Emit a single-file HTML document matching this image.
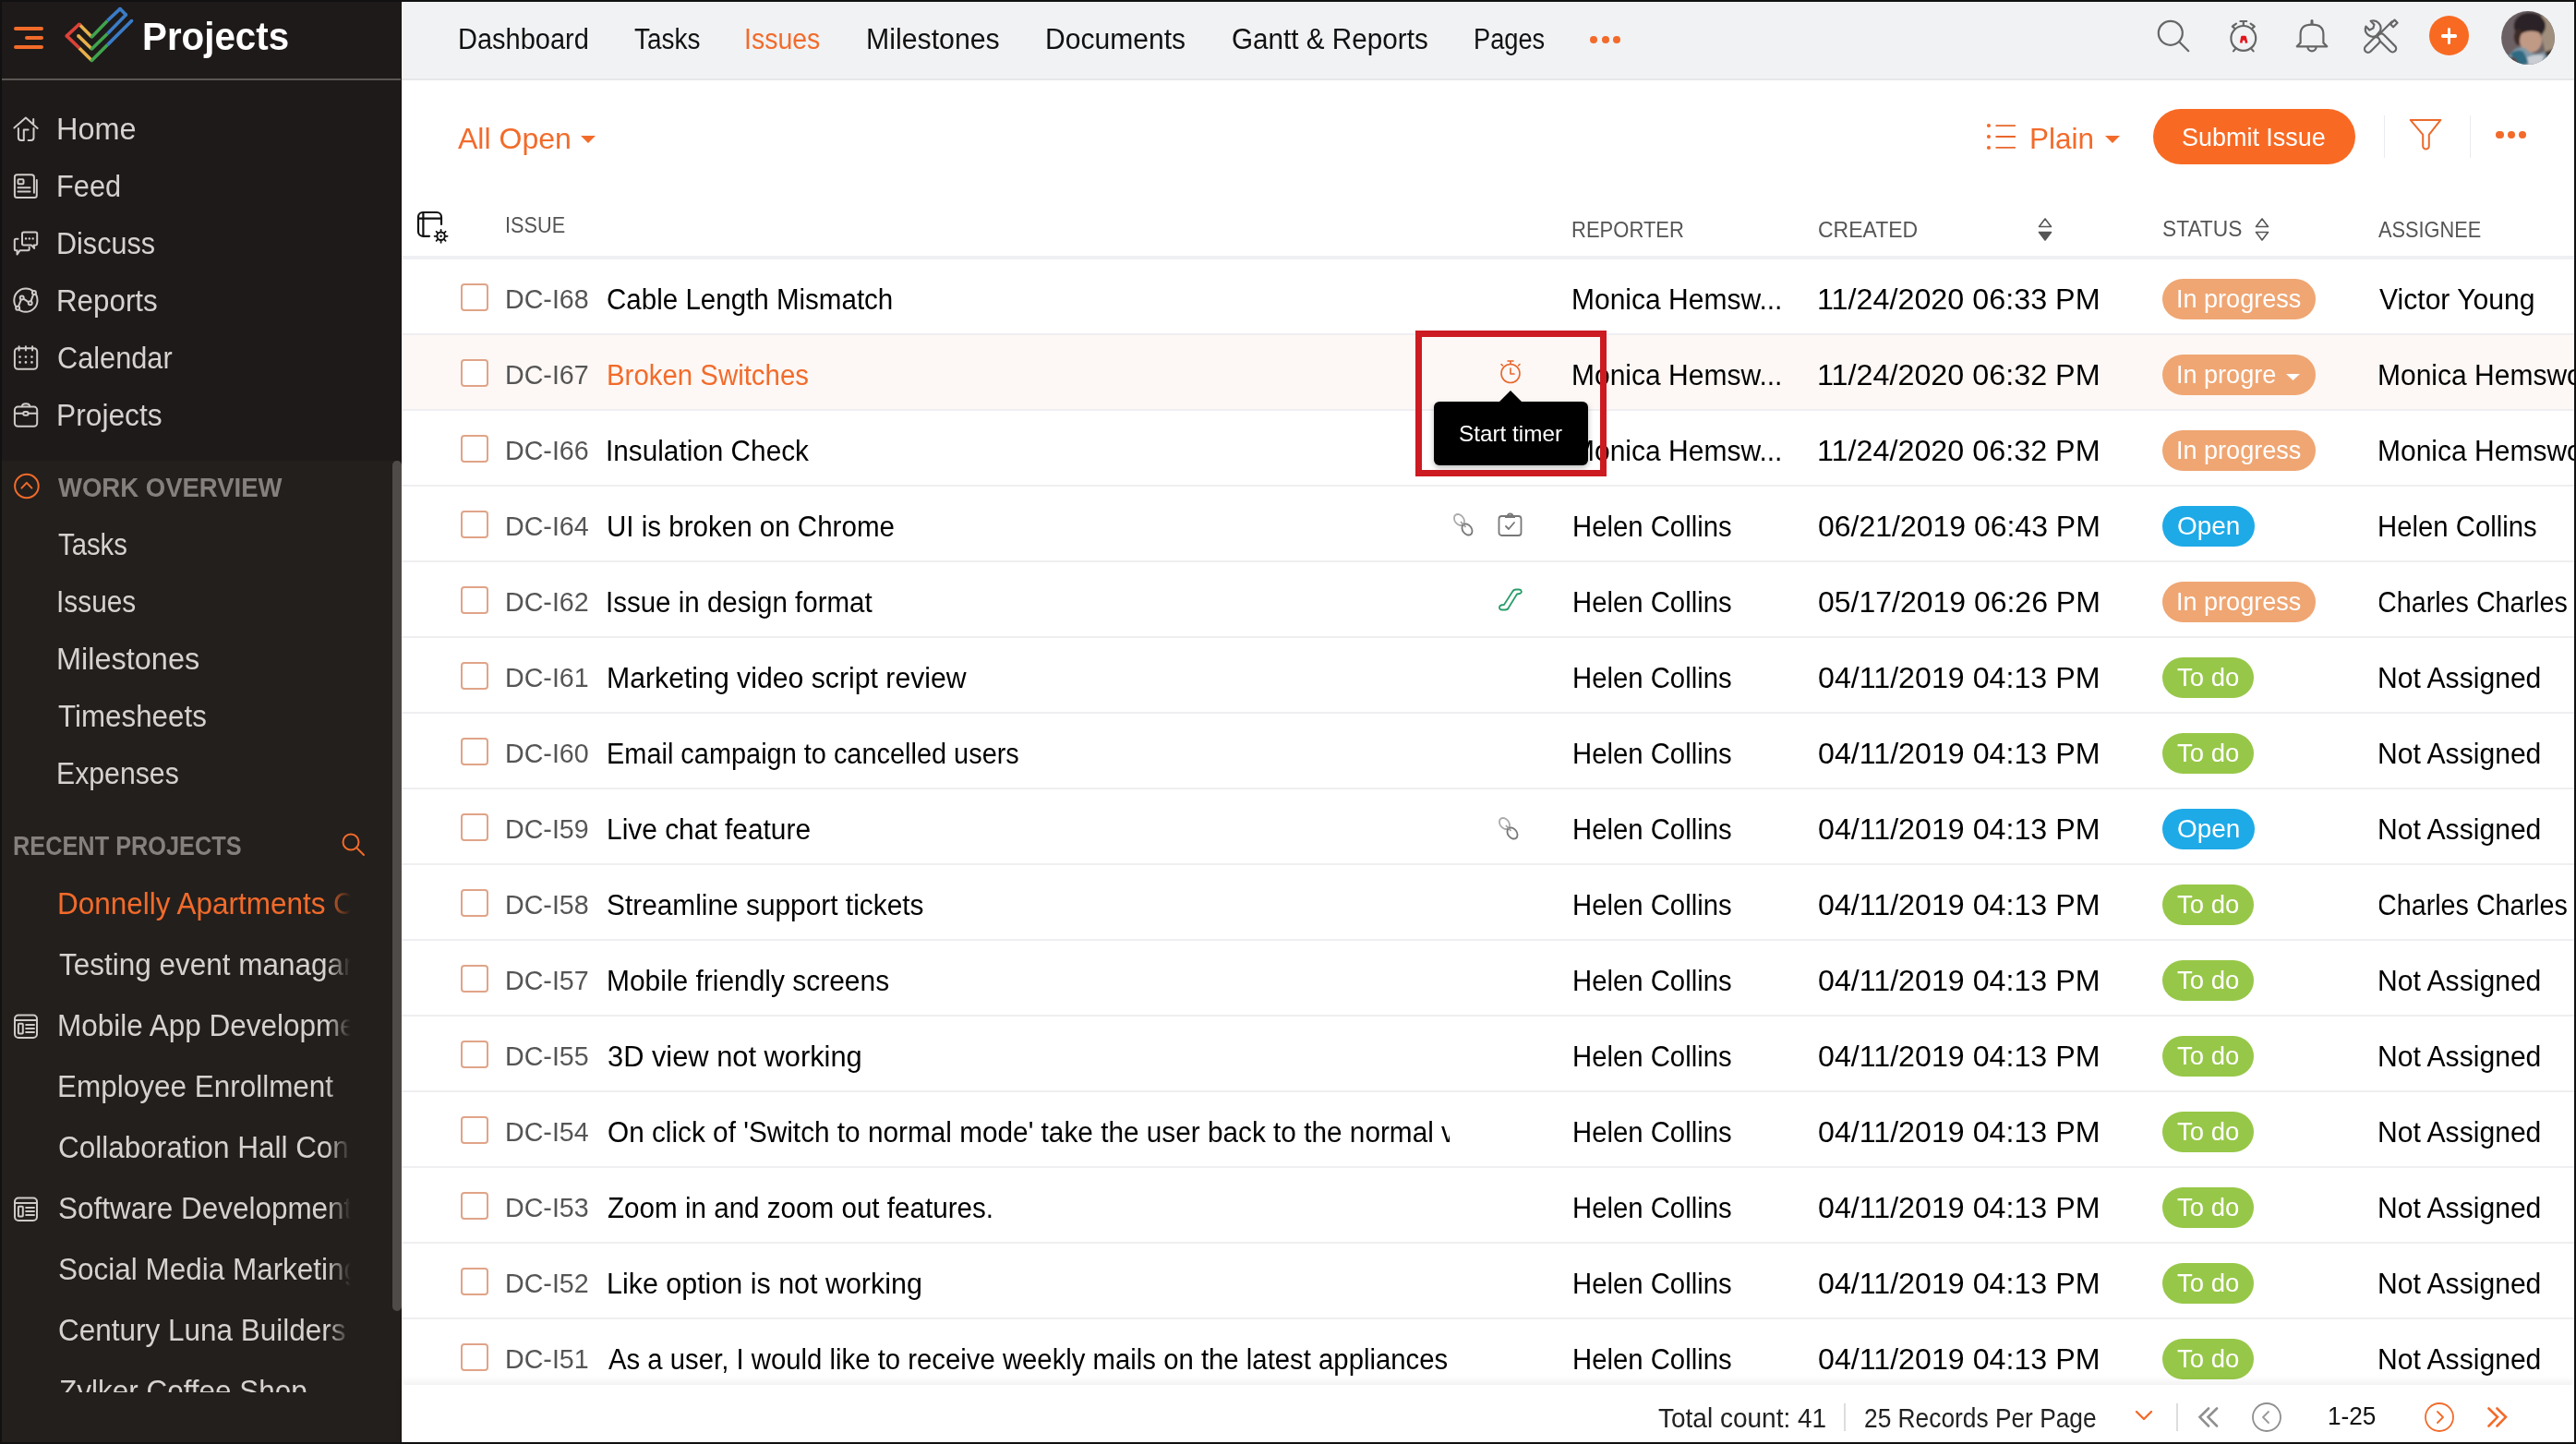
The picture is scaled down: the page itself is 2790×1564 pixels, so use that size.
<!DOCTYPE html><html><head><meta charset="utf-8"><style>
html,body{margin:0;padding:0;}
body{width:2790px;height:1564px;position:relative;overflow:hidden;background:#111;font-family:"Liberation Sans", sans-serif;}
.t{position:absolute;white-space:nowrap;}
.r{position:absolute;}
.s{position:absolute;overflow:visible;}
</style></head><body>
<div class="r" style="left:2px;top:2px;width:433px;height:1560px;background:#1e1a19;"></div>
<div class="r" style="left:2px;top:499px;width:433px;height:1063px;background:#231f1c;"></div>
<div class="r" style="left:2px;top:85px;width:433px;height:2px;background:#5b5654;"></div>
<div class="r" style="left:15px;top:29px;width:32px;height:4px;background:#f36b2a;border-radius:2px;"></div>
<div class="r" style="left:27px;top:39px;width:20px;height:4px;background:#f36b2a;border-radius:2px;"></div>
<div class="r" style="left:15px;top:49px;width:32px;height:4px;background:#f36b2a;border-radius:2px;"></div>
<svg class="s" style="left:0px;top:0px;" width="160" height="80" viewBox="0 0 160 80" fill="none"><g stroke-width="3.6" stroke-linecap="butt" stroke-linejoin="round">
<polyline points="99.4,65.6 85.8,52" stroke="#e8b04b"/>
<polyline points="85.8,26.3 99.4,39.9" stroke="#e8b04b"/>
<polyline points="99.4,53 84.9,38.9" stroke="#e8b04b"/>
<polyline points="85.8,52 72.3,38.9 85.8,26.3" stroke="#dc4239"/>
<polyline points="116.4,48.6 99.4,65.6" stroke="#40a44e"/>
<polyline points="99.4,39.9 116.4,22.4" stroke="#40a44e"/>
<polyline points="116.4,36.5 99.4,53" stroke="#40a44e"/>
<polyline points="142.6,22.5 116.4,48.6" stroke="#3b7cc6"/>
<polyline points="116.4,22.4 130,9.6 136.4,16.1 116.4,36.5" stroke="#3b7cc6"/>
</g>
<circle cx="99.4" cy="65.6" r="1.8" fill="#40a44e"/><circle cx="72.3" cy="38.9" r="1.8" fill="#dc4239"/><circle cx="85.8" cy="26.3" r="1.8" fill="#dc4239"/>
<circle cx="99.4" cy="39.9" r="1.8" fill="#40a44e"/><circle cx="99.4" cy="53" r="1.8" fill="#40a44e"/><circle cx="130" cy="9.6" r="1.8" fill="#3b7cc6"/><circle cx="136.4" cy="16.1" r="1.8" fill="#3b7cc6"/>
<circle cx="142.6" cy="22.5" r="1.8" fill="#3b7cc6"/><circle cx="84.9" cy="38.9" r="1.8" fill="#e8b04b"/></svg>
<div class="t" style="left:153.69px;top:18.2px;font-size:43px;line-height:43px;color:#fff;font-weight:700;transform:scaleX(0.9376);transform-origin:0 0;">Projects</div>
<div class="t" style="left:61.15px;top:122.9px;font-size:33px;line-height:33px;color:#d6d2d0;font-weight:400;transform:scaleX(0.9845);transform-origin:0 0;">Home</div>
<div class="t" style="left:61.30px;top:184.9px;font-size:33px;line-height:33px;color:#d6d2d0;font-weight:400;transform:scaleX(0.9329);transform-origin:0 0;">Feed</div>
<div class="t" style="left:61.32px;top:246.9px;font-size:33px;line-height:33px;color:#d6d2d0;font-weight:400;transform:scaleX(0.9259);transform-origin:0 0;">Discuss</div>
<div class="t" style="left:61.25px;top:308.9px;font-size:33px;line-height:33px;color:#d6d2d0;font-weight:400;transform:scaleX(0.9491);transform-origin:0 0;">Reports</div>
<div class="t" style="left:62.24px;top:370.9px;font-size:33px;line-height:33px;color:#d6d2d0;font-weight:400;transform:scaleX(0.9311);transform-origin:0 0;">Calendar</div>
<div class="t" style="left:61.21px;top:432.9px;font-size:33px;line-height:33px;color:#d6d2d0;font-weight:400;transform:scaleX(0.9617);transform-origin:0 0;">Projects</div>
<svg class="s" style="left:0px;top:120px;" width="60" height="40" viewBox="0 120 60 40" fill="none"><path d="M15.4 138.5 L27.9 127.5 L40.7 138.9 M36.2 128.9 V134 M19.9 139 V149 Q19.9 152 23 152 H25.8 V140.6 H30.6 M36.5 139 V149 Q36.5 152 33.5 152 H30.6" stroke="#cfcbc9" stroke-width="2" stroke-linecap="round" stroke-linejoin="round"/></svg>
<svg class="s" style="left:0px;top:180px;" width="60" height="40" viewBox="0 180 60 40" fill="none"><path d="M36.9 208.8 V191.8 Q36.9 189.3 33.9 189.3 H18.4 Q15.9 189.3 15.9 191.8 V211.4 Q15.9 213.9 18.4 213.9 H37.3 Q39.8 213.9 39.8 211.4 V195" stroke="#cfcbc9" stroke-width="2" stroke-linecap="round" stroke-linejoin="round"/><rect x="19.5" y="194.2" width="6" height="5" rx="1" stroke="#cfcbc9" stroke-width="2" stroke-linecap="round" stroke-linejoin="round"/><path d="M19.5 203.3 H32.5 M19.5 207.5 H32.5" stroke="#cfcbc9" stroke-width="2" stroke-linecap="round" stroke-linejoin="round"/></svg>
<svg class="s" style="left:0px;top:240px;" width="60" height="40" viewBox="0 240 60 40" fill="none"><path d="M25.7 251.6 H38.6 Q40.2 251.6 40.2 253.2 V264 Q40.2 265.4 38.8 265.4 H36.6 L37.2 269 L33.8 265.4 H25.6 Q24 265.4 24 263.8 V253.2 Q24 251.6 25.7 251.6 Z" stroke="#cfcbc9" stroke-width="2" stroke-linecap="round" stroke-linejoin="round"/><path d="M19.5 258.7 H17.3 Q15.8 258.7 15.8 260.2 V269.7 Q15.8 271.2 17.3 271.2 H18.6 L18.5 275.6 L21.6 271.2 H30.2 Q31.7 271.2 31.7 269.7 V267.8" stroke="#cfcbc9" stroke-width="2" stroke-linecap="round" stroke-linejoin="round"/><path d="M28 258.4 h.1 M31.8 258.4 h.1 M35.6 258.4 h.1" stroke="#cfcbc9" stroke-width="2.4" stroke-linecap="round"/></svg>
<svg class="s" style="left:0px;top:300px;" width="60" height="40" viewBox="0 300 60 40" fill="none"><circle cx="27.9" cy="325.2" r="12.6" stroke="#cfcbc9" stroke-width="2" stroke-linecap="round" stroke-linejoin="round"/><path d="M19.2 333.8 L23.7 322.4 L32.7 328.3 L36.9 316.9" stroke="#cfcbc9" stroke-width="2" stroke-linecap="round" stroke-linejoin="round"/><circle cx="19.2" cy="333.8" r="2" fill="#1e1a19" stroke="#cfcbc9" stroke-width="2" stroke-linecap="round" stroke-linejoin="round"/><circle cx="23.7" cy="322.4" r="2" fill="#1e1a19" stroke="#cfcbc9" stroke-width="2" stroke-linecap="round" stroke-linejoin="round"/><circle cx="32.7" cy="328.3" r="2" fill="#1e1a19" stroke="#cfcbc9" stroke-width="2" stroke-linecap="round" stroke-linejoin="round"/><circle cx="36.9" cy="316.9" r="2" fill="#1e1a19" stroke="#cfcbc9" stroke-width="2" stroke-linecap="round" stroke-linejoin="round"/></svg>
<svg class="s" style="left:0px;top:365px;" width="60" height="40" viewBox="0 365 60 40" fill="none"><rect x="15.9" y="377.3" width="24.3" height="22.5" rx="3.5" stroke="#cfcbc9" stroke-width="2" stroke-linecap="round" stroke-linejoin="round"/><path d="M20.6 375.2 V379.5 M27.9 375.2 V379.5 M35.1 375.2 V379.5" stroke="#cfcbc9" stroke-width="2" stroke-linecap="round" stroke-linejoin="round"/><path d="M21.5 386.5 h.1 M27.9 386.5 h.1 M34.4 386.5 h.1 M21.5 392.4 h.1 M27.9 392.4 h.1 M34.4 392.4 h.1" stroke="#cfcbc9" stroke-width="2.6" stroke-linecap="round"/></svg>
<svg class="s" style="left:0px;top:425px;" width="60" height="40" viewBox="0 425 60 40" fill="none"><rect x="15.9" y="440.6" width="24.3" height="21.2" rx="3.5" stroke="#cfcbc9" stroke-width="2" stroke-linecap="round" stroke-linejoin="round"/><path d="M23.9 440.3 Q23.9 437.3 28 437.3 Q32.2 437.3 32.2 440.3" stroke="#cfcbc9" stroke-width="2" stroke-linecap="round" stroke-linejoin="round"/><path d="M15.9 447.8 H25.2 M30.6 447.8 H40.2" stroke="#cfcbc9" stroke-width="2" stroke-linecap="round" stroke-linejoin="round"/><rect x="25.3" y="445.9" width="5.2" height="3.8" rx="1.5" stroke="#cfcbc9" stroke-width="2" stroke-linecap="round" stroke-linejoin="round"/></svg>
<svg class="s" style="left:0px;top:505px;" width="60" height="40" viewBox="0 505 60 40" fill="none"><circle cx="28.9" cy="526.5" r="12.8" stroke="#f26b2b" stroke-width="2"/><path d="M23.4 528.6 L28.9 522.9 L34.4 528.6" stroke="#f26b2b" stroke-width="2" stroke-linecap="round" stroke-linejoin="round"/></svg>
<div class="t" style="left:63.00px;top:514.4px;font-size:29px;line-height:29px;color:#85807e;font-weight:700;transform:scaleX(0.9488);transform-origin:0 0;">WORK OVERVIEW</div>
<div class="t" style="left:62.61px;top:573.1px;font-size:33px;line-height:33px;color:#d6d2d0;font-weight:400;transform:scaleX(0.8878);transform-origin:0 0;">Tasks</div>
<div class="t" style="left:60.79px;top:635.1px;font-size:33px;line-height:33px;color:#d6d2d0;font-weight:400;transform:scaleX(0.9044);transform-origin:0 0;">Issues</div>
<div class="t" style="left:60.55px;top:697.1px;font-size:33px;line-height:33px;color:#d6d2d0;font-weight:400;transform:scaleX(0.9838);transform-origin:0 0;">Milestones</div>
<div class="t" style="left:62.55px;top:759.1px;font-size:33px;line-height:33px;color:#d6d2d0;font-weight:400;transform:scaleX(0.9497);transform-origin:0 0;">Timesheets</div>
<div class="t" style="left:60.75px;top:821.1px;font-size:33px;line-height:33px;color:#d6d2d0;font-weight:400;transform:scaleX(0.9163);transform-origin:0 0;">Expenses</div>
<div class="t" style="left:14.25px;top:902.0px;font-size:29px;line-height:29px;color:#85807e;font-weight:700;transform:scaleX(0.8733);transform-origin:0 0;">RECENT PROJECTS</div>
<svg class="s" style="left:368px;top:900px;" width="30" height="30" viewBox="0 0 30 30" fill="none"><circle cx="12" cy="12" r="8.5" stroke="#f26b2b" stroke-width="2"/><path d="M18 18 L26 26" stroke="#f26b2b" stroke-width="2" stroke-linecap="round"/></svg>
<div class="r" style="left:2px;top:940px;width:380px;height:568px;overflow:hidden;">
<div class="t" style="left:60.10px;top:22.7px;font-size:32.5px;line-height:32.5px;color:#f26b2b;font-weight:400;transform:scaleX(0.9683);transform-origin:0 0;">Donnelly Apartments Construction</div>
<div class="t" style="left:62.03px;top:88.7px;font-size:32.5px;line-height:32.5px;color:#d6d2d0;font-weight:400;transform:scaleX(0.9683);transform-origin:0 0;">Testing event managament</div>
<div class="t" style="left:60.10px;top:154.7px;font-size:32.5px;line-height:32.5px;color:#d6d2d0;font-weight:400;transform:scaleX(0.9683);transform-origin:0 0;">Mobile App Development</div>
<div class="t" style="left:60.10px;top:220.7px;font-size:32.5px;line-height:32.5px;color:#d6d2d0;font-weight:400;transform:scaleX(0.9683);transform-origin:0 0;">Employee Enrollment</div>
<div class="t" style="left:61.06px;top:286.7px;font-size:32.5px;line-height:32.5px;color:#d6d2d0;font-weight:400;transform:scaleX(0.9683);transform-origin:0 0;">Collaboration Hall Construction</div>
<div class="t" style="left:61.06px;top:352.7px;font-size:32.5px;line-height:32.5px;color:#d6d2d0;font-weight:400;transform:scaleX(0.9683);transform-origin:0 0;">Software Development</div>
<div class="t" style="left:61.06px;top:418.7px;font-size:32.5px;line-height:32.5px;color:#d6d2d0;font-weight:400;transform:scaleX(0.9683);transform-origin:0 0;">Social Media Marketing</div>
<div class="t" style="left:61.06px;top:484.7px;font-size:32.5px;line-height:32.5px;color:#d6d2d0;font-weight:400;transform:scaleX(0.9683);transform-origin:0 0;">Century Luna Builders</div>
<div class="t" style="left:62.03px;top:550.7px;font-size:32.5px;line-height:32.5px;color:#d6d2d0;font-weight:400;transform:scaleX(0.9683);transform-origin:0 0;">Zylker Coffee Shop</div>
<div class="r" style="left:352px;top:0;width:28px;height:568px;background:linear-gradient(to right,rgba(35,31,28,0),#231f1c 92%);"></div>
</div>
<svg class="s" style="left:0px;top:1090px;" width="60" height="40" viewBox="0 1090 60 40" fill="none"><rect x="16" y="1099.5" width="24" height="24.4" rx="4" stroke="#cfcbc9" stroke-width="2" stroke-linecap="round" stroke-linejoin="round"/><path d="M16 1104.9 H40" stroke="#cfcbc9" stroke-width="2" stroke-linecap="round" stroke-linejoin="round"/><rect x="19.9" y="1108.8" width="4.9" height="10.7" rx="0.8" stroke="#cfcbc9" stroke-width="2" stroke-linecap="round" stroke-linejoin="round"/><path d="M28.2 1109.9 H37 M28.2 1113.9 H37 M28.2 1118 H37" stroke="#cfcbc9" stroke-width="2" stroke-linecap="round" stroke-linejoin="round"/></svg>
<svg class="s" style="left:0px;top:1288px;" width="60" height="40" viewBox="0 1288 60 40" fill="none"><rect x="16" y="1297.5" width="24" height="24.4" rx="4" stroke="#cfcbc9" stroke-width="2" stroke-linecap="round" stroke-linejoin="round"/><path d="M16 1302.9 H40" stroke="#cfcbc9" stroke-width="2" stroke-linecap="round" stroke-linejoin="round"/><rect x="19.9" y="1306.8" width="4.9" height="10.7" rx="0.8" stroke="#cfcbc9" stroke-width="2" stroke-linecap="round" stroke-linejoin="round"/><path d="M28.2 1307.9 H37 M28.2 1311.9 H37 M28.2 1316 H37" stroke="#cfcbc9" stroke-width="2" stroke-linecap="round" stroke-linejoin="round"/></svg>
<div class="r" style="left:434px;top:2px;width:1px;height:1560px;background:#141110;"></div>
<div class="r" style="left:425px;top:499px;width:10px;height:921px;background:#4f4b49;border-radius:5px;"></div>
<div class="r" style="left:435px;top:2px;width:2353px;height:1560px;background:#fff;"></div>
<div class="r" style="left:435px;top:2px;width:2353px;height:84px;background:#f1f2f4;"></div>
<div class="r" style="left:435px;top:85px;width:2353px;height:2px;background:#e6e7e9;"></div>
<div class="t" style="left:495.73px;top:26.7px;font-size:31px;line-height:31px;color:#111;font-weight:400;transform:scaleX(0.9351);transform-origin:0 0;">Dashboard</div>
<div class="t" style="left:687.10px;top:26.7px;font-size:31px;line-height:31px;color:#111;font-weight:400;transform:scaleX(0.9013);transform-origin:0 0;">Tasks</div>
<div class="t" style="left:806.24px;top:26.7px;font-size:31px;line-height:31px;color:#f26b2b;font-weight:400;transform:scaleX(0.9186);transform-origin:0 0;">Issues</div>
<div class="t" style="left:938.05px;top:26.7px;font-size:31px;line-height:31px;color:#111;font-weight:400;transform:scaleX(0.9766);transform-origin:0 0;">Milestones</div>
<div class="t" style="left:1132.06px;top:26.7px;font-size:31px;line-height:31px;color:#111;font-weight:400;transform:scaleX(0.9701);transform-origin:0 0;">Documents</div>
<div class="t" style="left:1334.04px;top:26.7px;font-size:31px;line-height:31px;color:#111;font-weight:400;transform:scaleX(0.9573);transform-origin:0 0;">Gantt &amp; Reports</div>
<div class="t" style="left:1595.54px;top:26.7px;font-size:31px;line-height:31px;color:#111;font-weight:400;transform:scaleX(0.8788);transform-origin:0 0;">Pages</div>
<div class="r" style="left:1722px;top:39px;width:8px;height:8px;background:#f26b2b;border-radius:50%;"></div>
<div class="r" style="left:1734.5px;top:39px;width:8px;height:8px;background:#f26b2b;border-radius:50%;"></div>
<div class="r" style="left:1747px;top:39px;width:8px;height:8px;background:#f26b2b;border-radius:50%;"></div>
<svg class="s" style="left:2336px;top:21px;" width="40" height="40" viewBox="0 0 40 40" fill="none"><circle cx="14.8" cy="14.8" r="13" stroke="#666" stroke-width="2.2" stroke-linecap="round" stroke-linejoin="round"/><path d="M24.2 24.2 L34.2 34.2" stroke="#666" stroke-width="2.2" stroke-linecap="round" stroke-linejoin="round"/></svg>
<svg class="s" style="left:2405px;top:15px;" width="50" height="50" viewBox="0 0 50 50" fill="none"><circle cx="24.8" cy="26.4" r="13.4" stroke="#666" stroke-width="2.2" stroke-linecap="round" stroke-linejoin="round"/><path d="M24.8 8 V12.6 M21.4 8 H28.2 M13.6 13 L17 10.6 M12.8 13.6 L15.6 16 M36 13 L32.6 10.6 M36.8 13.6 L34 16 M14 40.4 L16.6 37.4 M35.6 40.4 L33 37.4" stroke="#666" stroke-width="2.2" stroke-linecap="round" stroke-linejoin="round"/><path d="M22.2 31.6 L23.4 25 L26.6 25 L28.2 31.6 M23.2 27.5 H27" stroke="#e3161e" stroke-width="2.6" stroke-linecap="butt" stroke-linejoin="round"/></svg>
<svg class="s" style="left:2480px;top:15px;" width="50" height="50" viewBox="0 0 50 50" fill="none"><path d="M7.7 35.3 L11.6 31.4 V22 Q11.6 11.6 24 11.6 Q36.4 11.6 36.4 22 V31.4 L40.3 35.3 Z" stroke="#666" stroke-width="2.2" stroke-linecap="round" stroke-linejoin="round"/><path d="M24 7.4 V10.5" stroke="#666" stroke-width="3" stroke-linecap="round"/><path d="M19.4 35.8 a4.6 4.6 0 0 0 9.2 0" stroke="#666" stroke-width="2.2" stroke-linecap="round" stroke-linejoin="round"/></svg>
<svg class="s" style="left:2555px;top:15px;" width="50" height="50" viewBox="0 0 50 50" fill="none"><rect x="-12.5" y="-3.8" width="25" height="7.6" rx="3.8" transform="translate(30.2 31.4) rotate(45)" stroke="#666" stroke-width="2.2" stroke-linecap="round" stroke-linejoin="round"/><path d="M21.5 22.5 L35.5 8.5" stroke="#666" stroke-width="2.2" stroke-linecap="round" stroke-linejoin="round"/><rect x="-3.2" y="-2.2" width="6.4" height="4.4" transform="translate(37.8 10.4) rotate(-45)" stroke="#666" stroke-width="2.2" stroke-linecap="round" stroke-linejoin="round"/><rect x="-10" y="-3.8" width="20" height="7.6" rx="3.8" transform="translate(14.2 33.6) rotate(-45)" fill="#f1f2f4" stroke="#666" stroke-width="2.2" stroke-linecap="round" stroke-linejoin="round"/><path transform="translate(-1.2 3.6)" d="M19.4 20.5 A8.2 8.2 0 0 1 8.6 10 L12.6 14 L16.6 12 L17.6 8 L13.8 4.2 A8.2 8.2 0 0 1 24 15.2 Z" fill="#f1f2f4" stroke="#666" stroke-width="2.2" stroke-linecap="round" stroke-linejoin="round"/></svg>
<div class="r" style="left:2631px;top:17px;width:43px;height:43px;background:#f86a22;border-radius:50%;"></div>
<div class="r" style="left:2650.6px;top:30.4px;width:3.4px;height:17.2px;background:#fff;border-radius:1.7px;"></div>
<div class="r" style="left:2643.7px;top:37.3px;width:17.4px;height:3.4px;background:#fff;border-radius:1.7px;"></div>
<svg class="s" style="left:2709px;top:12px;" width="58" height="58" viewBox="0 0 58 58" fill="none"><defs><clipPath id="avc"><circle cx="29" cy="29" r="28.9"/></clipPath><filter id="avb" x="-20%" y="-20%" width="140%" height="140%"><feGaussianBlur stdDeviation="1"/></filter></defs>
<g clip-path="url(#avc)"><rect x="0" y="0" width="58" height="58" fill="#6b6063"/>
<g filter="url(#avb)">
<path d="M44 -2 L60 -2 L60 60 L50 60 Q47 40 44 30 Z" fill="#a08f7c"/>
<path d="M48 44 L60 40 L60 60 L46 60 Z" fill="#3a3230"/>
<ellipse cx="31" cy="16" rx="17" ry="14" fill="#2b2226"/>
<ellipse cx="19" cy="28" rx="5" ry="9" fill="#3a2a28"/>
<ellipse cx="32" cy="32" rx="12" ry="13" fill="#c19a86"/>
<path d="M22 24 Q32 19 44 24 L44 20 Q32 12 22 20 Z" fill="#2b2226"/>
<path d="M6 52 Q14 36 26 40 Q34 50 46 44 Q52 50 50 62 L4 62 Z" fill="#7f98a8"/>
<path d="M10 46 Q18 40 24 44 L30 56 L18 60 Z" fill="#2d6a82"/>
<path d="M28 50 Q38 46 46 48 L44 58 L30 60 Z" fill="#c9ccd2"/>
<path d="M0 50 L14 50 L24 62 L0 62 Z" fill="#5a4a46"/>
<path d="M4 56 L12 58 L10 62 L2 62 Z" fill="#7fd0d0"/>
</g></g></svg>
<div class="t" style="left:495.60px;top:133.5px;font-size:32px;line-height:32px;color:#f26b2b;font-weight:400;transform:scaleX(1.0008);transform-origin:0 0;">All Open</div>
<svg class="s" style="left:628px;top:146px;" width="18" height="10" viewBox="0 0 18 10" fill="none"><path d="M1 1 H17 L9 9 Z" fill="#f26b2b"/></svg>
<svg class="s" style="left:2150px;top:132px;" width="36" height="32" viewBox="0 0 36 32" fill="none"><path d="M3.9 4.1 h.1 M3.9 16 h.1 M3.9 27.9 h.1" stroke="#f26b2b" stroke-width="4" stroke-linecap="round"/><path d="M11.5 4.1 H32.9 M11.5 16 H32.9 M11.5 27.9 H32.9" stroke="#e8672d" stroke-width="1.8"/></svg>
<div class="t" style="left:2198.05px;top:133.9px;font-size:32px;line-height:32px;color:#f26b2b;font-weight:400;transform:scaleX(0.9848);transform-origin:0 0;">Plain</div>
<svg class="s" style="left:2279px;top:146px;" width="18" height="10" viewBox="0 0 18 10" fill="none"><path d="M1 1 H17 L9 9 Z" fill="#f26b2b"/></svg>
<div class="r" style="left:2332px;top:118px;width:219px;height:60px;background:#f86a24;border-radius:30px;"></div>
<div class="t" style="left:2363.04px;top:135.3px;font-size:28px;line-height:28px;color:#fff;font-weight:400;transform:scaleX(0.9625);transform-origin:0 0;">Submit Issue</div>
<div class="r" style="left:2581.5px;top:125px;width:1.6px;height:46px;background:#e9ebee;"></div>
<svg class="s" style="left:2608px;top:127px;" width="38" height="38" viewBox="0 0 38 38" fill="none"><path d="M2.6 2.9 H35.4 L22.8 18.8 V31.3 a3.3 3.3 0 0 1 -6.6 0 V18.8 Z" stroke="#ec6a2c" stroke-width="2" stroke-linejoin="round"/></svg>
<div class="r" style="left:2674.5px;top:125px;width:1.6px;height:46px;background:#e9ebee;"></div>
<div class="r" style="left:2703.2000000000003px;top:142px;width:8.4px;height:8.4px;background:#f26b2b;border-radius:50%;"></div>
<div class="r" style="left:2715.6000000000004px;top:142px;width:8.4px;height:8.4px;background:#f26b2b;border-radius:50%;"></div>
<div class="r" style="left:2728.0px;top:142px;width:8.4px;height:8.4px;background:#f26b2b;border-radius:50%;"></div>
<svg class="s" style="left:448px;top:226px;" width="40" height="40" viewBox="0 0 40 40" fill="none"><path d="M17 29.8 H10 a5 5 0 0 1 -5 -5 V9 a5 5 0 0 1 5 -5 H25 a5 5 0 0 1 5 5 V16.9 M5 10.6 H30 M10.4 4 V29.8" stroke="#111" stroke-width="2.2" stroke-linecap="round"/><g transform="translate(29.6,29.8)"><circle r="4.2" stroke="#111" stroke-width="2"/><circle r="1.3" fill="#111"/><path d="M0 -7 V-5 M0 5 V7 M-7 0 H-5 M5 0 H7 M-5 -5 L-3.6 -3.6 M5 5 L3.6 3.6 M-5 5 L-3.6 3.6 M5 -5 L3.6 -3.6" stroke="#111" stroke-width="1.8" stroke-linecap="round"/></g></svg>
<div class="t" style="left:546.63px;top:231.9px;font-size:24.5px;line-height:24.5px;color:#555;font-weight:400;transform:scaleX(0.8859);transform-origin:0 0;">ISSUE</div>
<div class="t" style="left:1702.10px;top:236.6px;font-size:24.5px;line-height:24.5px;color:#555;font-weight:400;transform:scaleX(0.8985);transform-origin:0 0;">REPORTER</div>
<div class="t" style="left:1969.06px;top:236.6px;font-size:24.5px;line-height:24.5px;color:#555;font-weight:400;transform:scaleX(0.9381);transform-origin:0 0;">CREATED</div>
<div class="t" style="left:2341.57px;top:236.1px;font-size:24.5px;line-height:24.5px;color:#555;font-weight:400;transform:scaleX(0.9286);transform-origin:0 0;">STATUS</div>
<div class="t" style="left:2576.00px;top:236.6px;font-size:24.5px;line-height:24.5px;color:#555;font-weight:400;transform:scaleX(0.8880);transform-origin:0 0;">ASSIGNEE</div>
<svg class="s" style="left:2206px;top:235px;" width="18" height="27" viewBox="0 0 18 27" fill="none"><path d="M2.5 10.5 L9 2 L15.5 10.5 Z" stroke="#555" stroke-width="1.6" stroke-linejoin="round"/><path d="M2.5 16.5 H15.5 L9 25 Z" fill="#555" stroke="#555" stroke-width="1.6" stroke-linejoin="round"/></svg>
<svg class="s" style="left:2441px;top:235px;" width="18" height="27" viewBox="0 0 18 27" fill="none"><path d="M2.5 10.5 L9 2 L15.5 10.5 Z" stroke="#555" stroke-width="1.6" stroke-linejoin="round"/><path d="M2.5 16.5 H15.5 L9 25 Z" stroke="#555" stroke-width="1.6" stroke-linejoin="round"/></svg>
<div class="r" style="left:435px;top:277px;width:2353px;height:4px;background:#eef0f3;"></div>
<div class="r" style="left:435px;top:361px;width:2353px;height:2px;background:#efeff1;"></div>
<div class="r" style="left:499px;top:307px;width:30px;height:30px;background:#fff;box-sizing:border-box;border:2px solid #e0a488;border-radius:4px;"></div>
<div class="t" style="left:547.32px;top:310.1px;font-size:29px;line-height:29px;color:#555;font-weight:400;transform:scaleX(0.9876);transform-origin:0 0;">DC-I68</div>
<div class="r" style="left:655px;top:281px;width:915px;height:80px;overflow:hidden;">
<div class="t" style="left:2.39px;top:27.5px;font-size:31px;line-height:31px;color:#000;font-weight:400;transform:scaleX(0.9528);transform-origin:0 0;">Cable Length Mismatch</div>
</div>
<div class="t" style="left:1702.06px;top:308.5px;font-size:31px;line-height:31px;color:#000;font-weight:400;transform:scaleX(0.9677);transform-origin:0 0;">Monica Hemsw...</div>
<div class="t" style="left:1967.52px;top:308.5px;font-size:31px;line-height:31px;color:#000;font-weight:400;transform:scaleX(1.0421);transform-origin:0 0;">11/24/2020 06:33 PM</div>
<div class="r" style="left:2342px;top:302px;width:166px;height:44px;background:#efa673;border-radius:22px;"></div>
<div class="t" style="left:2357.07px;top:309.9px;font-size:28px;line-height:28px;color:#fff;font-weight:400;transform:scaleX(0.9657);transform-origin:0 0;">In progress</div>
<div class="r" style="left:2577px;top:281px;width:211px;height:80px;overflow:hidden;">
<div class="t" style="left:0.00px;top:27.5px;font-size:31px;line-height:31px;color:#000;font-weight:400;transform:scaleX(0.9709);transform-origin:0 0;">Victor Young</div>
</div>
<div class="r" style="left:435px;top:363px;width:2353px;height:80px;background:#fdf8f5;"></div>
<div class="r" style="left:435px;top:443px;width:2353px;height:2px;background:#efeff1;"></div>
<div class="r" style="left:499px;top:389px;width:30px;height:30px;background:#fff;box-sizing:border-box;border:2px solid #e0a488;border-radius:4px;"></div>
<div class="t" style="left:547.32px;top:392.1px;font-size:29px;line-height:29px;color:#555;font-weight:400;transform:scaleX(0.9876);transform-origin:0 0;">DC-I67</div>
<div class="r" style="left:655px;top:363px;width:915px;height:80px;overflow:hidden;">
<div class="t" style="left:2.40px;top:27.5px;font-size:31px;line-height:31px;color:#f26b2b;font-weight:400;transform:scaleX(0.9482);transform-origin:0 0;">Broken Switches</div>
</div>
<div class="t" style="left:1702.06px;top:390.5px;font-size:31px;line-height:31px;color:#000;font-weight:400;transform:scaleX(0.9677);transform-origin:0 0;">Monica Hemsw...</div>
<div class="t" style="left:1967.52px;top:390.5px;font-size:31px;line-height:31px;color:#000;font-weight:400;transform:scaleX(1.0421);transform-origin:0 0;">11/24/2020 06:32 PM</div>
<div class="r" style="left:2342px;top:384px;width:166px;height:44px;background:#efa673;border-radius:22px;"></div>
<div class="t" style="left:2357.07px;top:391.9px;font-size:28px;line-height:28px;color:#fff;font-weight:400;transform:scaleX(0.9657);transform-origin:0 0;">In progre</div>
<svg class="s" style="left:2475px;top:404px;" width="17" height="9" viewBox="0 0 17 9" fill="none"><path d="M1 1 H16 L8.5 8 Z" fill="#fff"/></svg>
<div class="r" style="left:2577px;top:363px;width:211px;height:80px;overflow:hidden;">
<div class="t" style="left:-1.94px;top:27.5px;font-size:31px;line-height:31px;color:#000;font-weight:400;transform:scaleX(0.9677);transform-origin:0 0;">Monica Hemsworth</div>
</div>
<div class="r" style="left:435px;top:525px;width:2353px;height:2px;background:#efeff1;"></div>
<div class="r" style="left:499px;top:471px;width:30px;height:30px;background:#fff;box-sizing:border-box;border:2px solid #e0a488;border-radius:4px;"></div>
<div class="t" style="left:547.32px;top:474.1px;font-size:29px;line-height:29px;color:#555;font-weight:400;transform:scaleX(0.9876);transform-origin:0 0;">DC-I66</div>
<div class="r" style="left:655px;top:445px;width:915px;height:80px;overflow:hidden;">
<div class="t" style="left:1.42px;top:27.5px;font-size:31px;line-height:31px;color:#000;font-weight:400;transform:scaleX(0.9597);transform-origin:0 0;">Insulation Check</div>
</div>
<div class="t" style="left:1702.06px;top:472.5px;font-size:31px;line-height:31px;color:#000;font-weight:400;transform:scaleX(0.9677);transform-origin:0 0;">Monica Hemsw...</div>
<div class="t" style="left:1967.52px;top:472.5px;font-size:31px;line-height:31px;color:#000;font-weight:400;transform:scaleX(1.0421);transform-origin:0 0;">11/24/2020 06:32 PM</div>
<div class="r" style="left:2342px;top:466px;width:166px;height:44px;background:#efa673;border-radius:22px;"></div>
<div class="t" style="left:2357.07px;top:473.9px;font-size:28px;line-height:28px;color:#fff;font-weight:400;transform:scaleX(0.9657);transform-origin:0 0;">In progress</div>
<div class="r" style="left:2577px;top:445px;width:211px;height:80px;overflow:hidden;">
<div class="t" style="left:-1.94px;top:27.5px;font-size:31px;line-height:31px;color:#000;font-weight:400;transform:scaleX(0.9677);transform-origin:0 0;">Monica Hemsworth</div>
</div>
<div class="r" style="left:435px;top:607px;width:2353px;height:2px;background:#efeff1;"></div>
<div class="r" style="left:499px;top:553px;width:30px;height:30px;background:#fff;box-sizing:border-box;border:2px solid #e0a488;border-radius:4px;"></div>
<div class="t" style="left:547.32px;top:556.1px;font-size:29px;line-height:29px;color:#555;font-weight:400;transform:scaleX(0.9876);transform-origin:0 0;">DC-I64</div>
<div class="r" style="left:655px;top:527px;width:915px;height:80px;overflow:hidden;">
<div class="t" style="left:2.39px;top:27.5px;font-size:31px;line-height:31px;color:#000;font-weight:400;transform:scaleX(0.9528);transform-origin:0 0;">UI is broken on Chrome</div>
</div>
<div class="t" style="left:1703.21px;top:554.5px;font-size:31px;line-height:31px;color:#000;font-weight:400;transform:scaleX(0.9450);transform-origin:0 0;">Helen Collins</div>
<div class="t" style="left:1968.57px;top:554.5px;font-size:31px;line-height:31px;color:#000;font-weight:400;transform:scaleX(1.0314);transform-origin:0 0;">06/21/2019 06:43 PM</div>
<div class="r" style="left:2342px;top:548px;width:100px;height:44px;background:#1eaae7;border-radius:22px;"></div>
<div class="t" style="left:2357.60px;top:555.9px;font-size:28px;line-height:28px;color:#fff;font-weight:400;transform:scaleX(0.9970);transform-origin:0 0;">Open</div>
<div class="r" style="left:2577px;top:527px;width:211px;height:80px;overflow:hidden;">
<div class="t" style="left:-1.89px;top:27.5px;font-size:31px;line-height:31px;color:#000;font-weight:400;transform:scaleX(0.9456);transform-origin:0 0;">Helen Collins</div>
</div>
<div class="r" style="left:435px;top:689px;width:2353px;height:2px;background:#efeff1;"></div>
<div class="r" style="left:499px;top:635px;width:30px;height:30px;background:#fff;box-sizing:border-box;border:2px solid #e0a488;border-radius:4px;"></div>
<div class="t" style="left:547.32px;top:638.1px;font-size:29px;line-height:29px;color:#555;font-weight:400;transform:scaleX(0.9876);transform-origin:0 0;">DC-I62</div>
<div class="r" style="left:655px;top:609px;width:915px;height:80px;overflow:hidden;">
<div class="t" style="left:1.44px;top:27.5px;font-size:31px;line-height:31px;color:#000;font-weight:400;transform:scaleX(0.9520);transform-origin:0 0;">Issue in design format</div>
</div>
<div class="t" style="left:1703.21px;top:636.5px;font-size:31px;line-height:31px;color:#000;font-weight:400;transform:scaleX(0.9450);transform-origin:0 0;">Helen Collins</div>
<div class="t" style="left:1968.57px;top:636.5px;font-size:31px;line-height:31px;color:#000;font-weight:400;transform:scaleX(1.0314);transform-origin:0 0;">05/17/2019 06:26 PM</div>
<div class="r" style="left:2342px;top:630px;width:166px;height:44px;background:#efa673;border-radius:22px;"></div>
<div class="t" style="left:2357.07px;top:637.9px;font-size:28px;line-height:28px;color:#fff;font-weight:400;transform:scaleX(0.9657);transform-origin:0 0;">In progress</div>
<div class="r" style="left:2577px;top:609px;width:211px;height:80px;overflow:hidden;">
<div class="t" style="left:-1.85px;top:27.5px;font-size:31px;line-height:31px;color:#000;font-weight:400;transform:scaleX(0.9260);transform-origin:0 0;">Charles Charles</div>
</div>
<div class="r" style="left:435px;top:771px;width:2353px;height:2px;background:#efeff1;"></div>
<div class="r" style="left:499px;top:717px;width:30px;height:30px;background:#fff;box-sizing:border-box;border:2px solid #e0a488;border-radius:4px;"></div>
<div class="t" style="left:547.32px;top:720.1px;font-size:29px;line-height:29px;color:#555;font-weight:400;transform:scaleX(0.9876);transform-origin:0 0;">DC-I61</div>
<div class="r" style="left:655px;top:691px;width:915px;height:80px;overflow:hidden;">
<div class="t" style="left:2.35px;top:27.5px;font-size:31px;line-height:31px;color:#000;font-weight:400;transform:scaleX(0.9749);transform-origin:0 0;">Marketing video script review</div>
</div>
<div class="t" style="left:1703.21px;top:718.5px;font-size:31px;line-height:31px;color:#000;font-weight:400;transform:scaleX(0.9450);transform-origin:0 0;">Helen Collins</div>
<div class="t" style="left:1968.56px;top:718.5px;font-size:31px;line-height:31px;color:#000;font-weight:400;transform:scaleX(1.0385);transform-origin:0 0;">04/11/2019 04:13 PM</div>
<div class="r" style="left:2342px;top:712px;width:99px;height:44px;background:#97c748;border-radius:22px;"></div>
<div class="t" style="left:2357.62px;top:719.9px;font-size:28px;line-height:28px;color:#fff;font-weight:400;transform:scaleX(0.9821);transform-origin:0 0;">To do</div>
<div class="r" style="left:2577px;top:691px;width:211px;height:80px;overflow:hidden;">
<div class="t" style="left:-1.94px;top:27.5px;font-size:31px;line-height:31px;color:#000;font-weight:400;transform:scaleX(0.9709);transform-origin:0 0;">Not Assigned</div>
</div>
<div class="r" style="left:435px;top:853px;width:2353px;height:2px;background:#efeff1;"></div>
<div class="r" style="left:499px;top:799px;width:30px;height:30px;background:#fff;box-sizing:border-box;border:2px solid #e0a488;border-radius:4px;"></div>
<div class="t" style="left:547.32px;top:802.1px;font-size:29px;line-height:29px;color:#555;font-weight:400;transform:scaleX(0.9876);transform-origin:0 0;">DC-I60</div>
<div class="r" style="left:655px;top:773px;width:915px;height:80px;overflow:hidden;">
<div class="t" style="left:2.43px;top:27.5px;font-size:31px;line-height:31px;color:#000;font-weight:400;transform:scaleX(0.9328);transform-origin:0 0;">Email campaign to cancelled users</div>
</div>
<div class="t" style="left:1703.21px;top:800.5px;font-size:31px;line-height:31px;color:#000;font-weight:400;transform:scaleX(0.9450);transform-origin:0 0;">Helen Collins</div>
<div class="t" style="left:1968.56px;top:800.5px;font-size:31px;line-height:31px;color:#000;font-weight:400;transform:scaleX(1.0385);transform-origin:0 0;">04/11/2019 04:13 PM</div>
<div class="r" style="left:2342px;top:794px;width:99px;height:44px;background:#97c748;border-radius:22px;"></div>
<div class="t" style="left:2357.62px;top:801.9px;font-size:28px;line-height:28px;color:#fff;font-weight:400;transform:scaleX(0.9821);transform-origin:0 0;">To do</div>
<div class="r" style="left:2577px;top:773px;width:211px;height:80px;overflow:hidden;">
<div class="t" style="left:-1.94px;top:27.5px;font-size:31px;line-height:31px;color:#000;font-weight:400;transform:scaleX(0.9709);transform-origin:0 0;">Not Assigned</div>
</div>
<div class="r" style="left:435px;top:935px;width:2353px;height:2px;background:#efeff1;"></div>
<div class="r" style="left:499px;top:881px;width:30px;height:30px;background:#fff;box-sizing:border-box;border:2px solid #e0a488;border-radius:4px;"></div>
<div class="t" style="left:547.32px;top:884.1px;font-size:29px;line-height:29px;color:#555;font-weight:400;transform:scaleX(0.9876);transform-origin:0 0;">DC-I59</div>
<div class="r" style="left:655px;top:855px;width:915px;height:80px;overflow:hidden;">
<div class="t" style="left:2.37px;top:27.5px;font-size:31px;line-height:31px;color:#000;font-weight:400;transform:scaleX(0.9646);transform-origin:0 0;">Live chat feature</div>
</div>
<div class="t" style="left:1703.21px;top:882.5px;font-size:31px;line-height:31px;color:#000;font-weight:400;transform:scaleX(0.9450);transform-origin:0 0;">Helen Collins</div>
<div class="t" style="left:1968.56px;top:882.5px;font-size:31px;line-height:31px;color:#000;font-weight:400;transform:scaleX(1.0385);transform-origin:0 0;">04/11/2019 04:13 PM</div>
<div class="r" style="left:2342px;top:876px;width:100px;height:44px;background:#1eaae7;border-radius:22px;"></div>
<div class="t" style="left:2357.60px;top:883.9px;font-size:28px;line-height:28px;color:#fff;font-weight:400;transform:scaleX(0.9970);transform-origin:0 0;">Open</div>
<div class="r" style="left:2577px;top:855px;width:211px;height:80px;overflow:hidden;">
<div class="t" style="left:-1.94px;top:27.5px;font-size:31px;line-height:31px;color:#000;font-weight:400;transform:scaleX(0.9709);transform-origin:0 0;">Not Assigned</div>
</div>
<div class="r" style="left:435px;top:1017px;width:2353px;height:2px;background:#efeff1;"></div>
<div class="r" style="left:499px;top:963px;width:30px;height:30px;background:#fff;box-sizing:border-box;border:2px solid #e0a488;border-radius:4px;"></div>
<div class="t" style="left:547.32px;top:966.1px;font-size:29px;line-height:29px;color:#555;font-weight:400;transform:scaleX(0.9876);transform-origin:0 0;">DC-I58</div>
<div class="r" style="left:655px;top:937px;width:915px;height:80px;overflow:hidden;">
<div class="t" style="left:2.37px;top:27.5px;font-size:31px;line-height:31px;color:#000;font-weight:400;transform:scaleX(0.9630);transform-origin:0 0;">Streamline support tickets</div>
</div>
<div class="t" style="left:1703.21px;top:964.5px;font-size:31px;line-height:31px;color:#000;font-weight:400;transform:scaleX(0.9450);transform-origin:0 0;">Helen Collins</div>
<div class="t" style="left:1968.56px;top:964.5px;font-size:31px;line-height:31px;color:#000;font-weight:400;transform:scaleX(1.0385);transform-origin:0 0;">04/11/2019 04:13 PM</div>
<div class="r" style="left:2342px;top:958px;width:99px;height:44px;background:#97c748;border-radius:22px;"></div>
<div class="t" style="left:2357.62px;top:965.9px;font-size:28px;line-height:28px;color:#fff;font-weight:400;transform:scaleX(0.9821);transform-origin:0 0;">To do</div>
<div class="r" style="left:2577px;top:937px;width:211px;height:80px;overflow:hidden;">
<div class="t" style="left:-1.85px;top:27.5px;font-size:31px;line-height:31px;color:#000;font-weight:400;transform:scaleX(0.9260);transform-origin:0 0;">Charles Charles</div>
</div>
<div class="r" style="left:435px;top:1099px;width:2353px;height:2px;background:#efeff1;"></div>
<div class="r" style="left:499px;top:1045px;width:30px;height:30px;background:#fff;box-sizing:border-box;border:2px solid #e0a488;border-radius:4px;"></div>
<div class="t" style="left:547.32px;top:1048.1px;font-size:29px;line-height:29px;color:#555;font-weight:400;transform:scaleX(0.9876);transform-origin:0 0;">DC-I57</div>
<div class="r" style="left:655px;top:1019px;width:915px;height:80px;overflow:hidden;">
<div class="t" style="left:2.37px;top:27.5px;font-size:31px;line-height:31px;color:#000;font-weight:400;transform:scaleX(0.9656);transform-origin:0 0;">Mobile friendly screens</div>
</div>
<div class="t" style="left:1703.21px;top:1046.5px;font-size:31px;line-height:31px;color:#000;font-weight:400;transform:scaleX(0.9450);transform-origin:0 0;">Helen Collins</div>
<div class="t" style="left:1968.56px;top:1046.5px;font-size:31px;line-height:31px;color:#000;font-weight:400;transform:scaleX(1.0385);transform-origin:0 0;">04/11/2019 04:13 PM</div>
<div class="r" style="left:2342px;top:1040px;width:99px;height:44px;background:#97c748;border-radius:22px;"></div>
<div class="t" style="left:2357.62px;top:1047.9px;font-size:28px;line-height:28px;color:#fff;font-weight:400;transform:scaleX(0.9821);transform-origin:0 0;">To do</div>
<div class="r" style="left:2577px;top:1019px;width:211px;height:80px;overflow:hidden;">
<div class="t" style="left:-1.94px;top:27.5px;font-size:31px;line-height:31px;color:#000;font-weight:400;transform:scaleX(0.9709);transform-origin:0 0;">Not Assigned</div>
</div>
<div class="r" style="left:435px;top:1181px;width:2353px;height:2px;background:#efeff1;"></div>
<div class="r" style="left:499px;top:1127px;width:30px;height:30px;background:#fff;box-sizing:border-box;border:2px solid #e0a488;border-radius:4px;"></div>
<div class="t" style="left:547.32px;top:1130.1px;font-size:29px;line-height:29px;color:#555;font-weight:400;transform:scaleX(0.9876);transform-origin:0 0;">DC-I55</div>
<div class="r" style="left:655px;top:1101px;width:915px;height:80px;overflow:hidden;">
<div class="t" style="left:3.31px;top:27.5px;font-size:31px;line-height:31px;color:#000;font-weight:400;transform:scaleX(0.9938);transform-origin:0 0;">3D view not working</div>
</div>
<div class="t" style="left:1703.21px;top:1128.5px;font-size:31px;line-height:31px;color:#000;font-weight:400;transform:scaleX(0.9450);transform-origin:0 0;">Helen Collins</div>
<div class="t" style="left:1968.56px;top:1128.5px;font-size:31px;line-height:31px;color:#000;font-weight:400;transform:scaleX(1.0385);transform-origin:0 0;">04/11/2019 04:13 PM</div>
<div class="r" style="left:2342px;top:1122px;width:99px;height:44px;background:#97c748;border-radius:22px;"></div>
<div class="t" style="left:2357.62px;top:1129.9px;font-size:28px;line-height:28px;color:#fff;font-weight:400;transform:scaleX(0.9821);transform-origin:0 0;">To do</div>
<div class="r" style="left:2577px;top:1101px;width:211px;height:80px;overflow:hidden;">
<div class="t" style="left:-1.94px;top:27.5px;font-size:31px;line-height:31px;color:#000;font-weight:400;transform:scaleX(0.9709);transform-origin:0 0;">Not Assigned</div>
</div>
<div class="r" style="left:435px;top:1263px;width:2353px;height:2px;background:#efeff1;"></div>
<div class="r" style="left:499px;top:1209px;width:30px;height:30px;background:#fff;box-sizing:border-box;border:2px solid #e0a488;border-radius:4px;"></div>
<div class="t" style="left:547.32px;top:1212.1px;font-size:29px;line-height:29px;color:#555;font-weight:400;transform:scaleX(0.9876);transform-origin:0 0;">DC-I54</div>
<div class="r" style="left:655px;top:1183px;width:915px;height:80px;overflow:hidden;">
<div class="t" style="left:3.34px;top:27.5px;font-size:31px;line-height:31px;color:#000;font-weight:400;transform:scaleX(0.9602);transform-origin:0 0;">On click of &#39;Switch to normal mode&#39; take the user back to the normal view</div>
</div>
<div class="t" style="left:1703.21px;top:1210.5px;font-size:31px;line-height:31px;color:#000;font-weight:400;transform:scaleX(0.9450);transform-origin:0 0;">Helen Collins</div>
<div class="t" style="left:1968.56px;top:1210.5px;font-size:31px;line-height:31px;color:#000;font-weight:400;transform:scaleX(1.0385);transform-origin:0 0;">04/11/2019 04:13 PM</div>
<div class="r" style="left:2342px;top:1204px;width:99px;height:44px;background:#97c748;border-radius:22px;"></div>
<div class="t" style="left:2357.62px;top:1211.9px;font-size:28px;line-height:28px;color:#fff;font-weight:400;transform:scaleX(0.9821);transform-origin:0 0;">To do</div>
<div class="r" style="left:2577px;top:1183px;width:211px;height:80px;overflow:hidden;">
<div class="t" style="left:-1.94px;top:27.5px;font-size:31px;line-height:31px;color:#000;font-weight:400;transform:scaleX(0.9709);transform-origin:0 0;">Not Assigned</div>
</div>
<div class="r" style="left:435px;top:1345px;width:2353px;height:2px;background:#efeff1;"></div>
<div class="r" style="left:499px;top:1291px;width:30px;height:30px;background:#fff;box-sizing:border-box;border:2px solid #e0a488;border-radius:4px;"></div>
<div class="t" style="left:547.32px;top:1294.1px;font-size:29px;line-height:29px;color:#555;font-weight:400;transform:scaleX(0.9876);transform-origin:0 0;">DC-I53</div>
<div class="r" style="left:655px;top:1265px;width:915px;height:80px;overflow:hidden;">
<div class="t" style="left:3.34px;top:27.5px;font-size:31px;line-height:31px;color:#000;font-weight:400;transform:scaleX(0.9551);transform-origin:0 0;">Zoom in and zoom out features.</div>
</div>
<div class="t" style="left:1703.21px;top:1292.5px;font-size:31px;line-height:31px;color:#000;font-weight:400;transform:scaleX(0.9450);transform-origin:0 0;">Helen Collins</div>
<div class="t" style="left:1968.56px;top:1292.5px;font-size:31px;line-height:31px;color:#000;font-weight:400;transform:scaleX(1.0385);transform-origin:0 0;">04/11/2019 04:13 PM</div>
<div class="r" style="left:2342px;top:1286px;width:99px;height:44px;background:#97c748;border-radius:22px;"></div>
<div class="t" style="left:2357.62px;top:1293.9px;font-size:28px;line-height:28px;color:#fff;font-weight:400;transform:scaleX(0.9821);transform-origin:0 0;">To do</div>
<div class="r" style="left:2577px;top:1265px;width:211px;height:80px;overflow:hidden;">
<div class="t" style="left:-1.94px;top:27.5px;font-size:31px;line-height:31px;color:#000;font-weight:400;transform:scaleX(0.9709);transform-origin:0 0;">Not Assigned</div>
</div>
<div class="r" style="left:435px;top:1427px;width:2353px;height:2px;background:#efeff1;"></div>
<div class="r" style="left:499px;top:1373px;width:30px;height:30px;background:#fff;box-sizing:border-box;border:2px solid #e0a488;border-radius:4px;"></div>
<div class="t" style="left:547.32px;top:1376.1px;font-size:29px;line-height:29px;color:#555;font-weight:400;transform:scaleX(0.9876);transform-origin:0 0;">DC-I52</div>
<div class="r" style="left:655px;top:1347px;width:915px;height:80px;overflow:hidden;">
<div class="t" style="left:2.34px;top:27.5px;font-size:31px;line-height:31px;color:#000;font-weight:400;transform:scaleX(0.9820);transform-origin:0 0;">Like option is not working</div>
</div>
<div class="t" style="left:1703.21px;top:1374.5px;font-size:31px;line-height:31px;color:#000;font-weight:400;transform:scaleX(0.9450);transform-origin:0 0;">Helen Collins</div>
<div class="t" style="left:1968.56px;top:1374.5px;font-size:31px;line-height:31px;color:#000;font-weight:400;transform:scaleX(1.0385);transform-origin:0 0;">04/11/2019 04:13 PM</div>
<div class="r" style="left:2342px;top:1368px;width:99px;height:44px;background:#97c748;border-radius:22px;"></div>
<div class="t" style="left:2357.62px;top:1375.9px;font-size:28px;line-height:28px;color:#fff;font-weight:400;transform:scaleX(0.9821);transform-origin:0 0;">To do</div>
<div class="r" style="left:2577px;top:1347px;width:211px;height:80px;overflow:hidden;">
<div class="t" style="left:-1.94px;top:27.5px;font-size:31px;line-height:31px;color:#000;font-weight:400;transform:scaleX(0.9709);transform-origin:0 0;">Not Assigned</div>
</div>
<div class="r" style="left:435px;top:1509px;width:2353px;height:2px;background:#efeff1;"></div>
<div class="r" style="left:499px;top:1455px;width:30px;height:30px;background:#fff;box-sizing:border-box;border:2px solid #e0a488;border-radius:4px;"></div>
<div class="t" style="left:547.32px;top:1458.1px;font-size:29px;line-height:29px;color:#555;font-weight:400;transform:scaleX(0.9876);transform-origin:0 0;">DC-I51</div>
<div class="r" style="left:655px;top:1429px;width:915px;height:80px;overflow:hidden;">
<div class="t" style="left:4.30px;top:27.5px;font-size:31px;line-height:31px;color:#000;font-weight:400;transform:scaleX(0.9456);transform-origin:0 0;">As a user, I would like to receive weekly mails on the latest appliances</div>
</div>
<div class="t" style="left:1703.21px;top:1456.5px;font-size:31px;line-height:31px;color:#000;font-weight:400;transform:scaleX(0.9450);transform-origin:0 0;">Helen Collins</div>
<div class="t" style="left:1968.56px;top:1456.5px;font-size:31px;line-height:31px;color:#000;font-weight:400;transform:scaleX(1.0385);transform-origin:0 0;">04/11/2019 04:13 PM</div>
<div class="r" style="left:2342px;top:1450px;width:99px;height:44px;background:#97c748;border-radius:22px;"></div>
<div class="t" style="left:2357.62px;top:1457.9px;font-size:28px;line-height:28px;color:#fff;font-weight:400;transform:scaleX(0.9821);transform-origin:0 0;">To do</div>
<div class="r" style="left:2577px;top:1429px;width:211px;height:80px;overflow:hidden;">
<div class="t" style="left:-1.94px;top:27.5px;font-size:31px;line-height:31px;color:#000;font-weight:400;transform:scaleX(0.9709);transform-origin:0 0;">Not Assigned</div>
</div>
<svg class="s" style="left:1622px;top:388px;" width="30" height="30" viewBox="0 0 30 30" fill="none"><circle cx="14" cy="16.5" r="10" stroke="#e8672d" stroke-width="1.6"/><path d="M14 6.5 V3 M11 3 H17 M5.5 8 L4 6.5 M22.5 8 L24 6.5 M14 11 V17 H18" stroke="#e8672d" stroke-width="1.6" stroke-linecap="round" stroke-linejoin="round"/></svg>
<svg class="s" style="left:1572px;top:554px;" width="28" height="28" viewBox="0 0 28 28" fill="none"><ellipse cx="8.5" cy="9" rx="4.8" ry="6.6" transform="rotate(-38 8.5 9)" stroke="#aaa" stroke-width="1.8"/><ellipse cx="17" cy="19.5" rx="4.8" ry="6.6" transform="rotate(-38 17 19.5)" stroke="#777" stroke-width="1.8"/><path d="M10 11 L15.5 17" stroke="#999" stroke-width="1.6"/></svg>
<svg class="s" style="left:1621px;top:555px;" width="30" height="30" viewBox="0 0 30 30" fill="none"><rect x="2.5" y="4" width="24" height="21" rx="3" stroke="#777" stroke-width="1.8"/><path d="M9 5 H20 M11.5 4.5 a3 3 0 0 1 6 0" stroke="#777" stroke-width="1.8"/><path d="M10 15 L13 18 L19 11" stroke="#777" stroke-width="1.8" stroke-linecap="round" stroke-linejoin="round"/></svg>
<svg class="s" style="left:1621px;top:635px;" width="30" height="30" viewBox="0 0 30 30" fill="none"><path d="M3 23 C3 20 6 20 8 20 L17 6 C18 4 19 3.5 21 3.5 H24 C27 3.5 28 6.5 25 8 L22 8.5 L13 23 C12.5 25 11 25.5 9 25.5 H6 C4 25.5 3 25 3 23 Z" stroke="#2a9d6b" stroke-width="1.8" stroke-linejoin="round"/></svg>
<svg class="s" style="left:1621px;top:883px;" width="28" height="28" viewBox="0 0 28 28" fill="none"><ellipse cx="8.5" cy="9" rx="4.8" ry="6.6" transform="rotate(-38 8.5 9)" stroke="#aaa" stroke-width="1.8"/><ellipse cx="17" cy="19.5" rx="4.8" ry="6.6" transform="rotate(-38 17 19.5)" stroke="#777" stroke-width="1.8"/><path d="M10 11 L15.5 17" stroke="#999" stroke-width="1.6"/></svg>
<div class="r" style="left:1553px;top:435px;width:167px;height:69px;background:#000;border-radius:6px;box-shadow:0 3px 6px rgba(0,0,0,0.25);"></div>
<svg class="s" style="left:1623px;top:423px;" width="26" height="13" viewBox="0 0 26 13" fill="none"><path d="M0 13 L13 0 L26 13 Z" fill="#000"/></svg>
<div class="t" style="left:1579.69px;top:457.5px;font-size:24px;line-height:24px;color:#fff;font-weight:400;transform:scaleX(1.0118);transform-origin:0 0;">Start timer</div>
<div class="r" style="left:1533px;top:358px;width:207px;height:158px;box-sizing:border-box;border:7px solid #cc1b21;"></div>
<div class="r" style="left:435px;top:1500px;width:2353px;height:62px;background:#fff;box-shadow:0 -4px 8px rgba(0,0,0,0.06);"></div>
<div class="t" style="left:1795.87px;top:1520.6px;font-size:30px;line-height:30px;color:#222;font-weight:400;transform:scaleX(0.9337);transform-origin:0 0;">Total count: 41</div>
<div class="r" style="left:1997px;top:1520px;width:2px;height:30px;background:#ddd;"></div>
<div class="t" style="left:2019.12px;top:1520.6px;font-size:30px;line-height:30px;color:#222;font-weight:400;transform:scaleX(0.8772);transform-origin:0 0;">25 Records Per Page</div>
<svg class="s" style="left:2311px;top:1526px;" width="24" height="16" viewBox="0 0 24 16" fill="none"><path d="M3 3 L11 11 L19 3" stroke="#f26b2b" stroke-width="2.4" stroke-linecap="round" stroke-linejoin="round"/></svg>
<div class="r" style="left:2357px;top:1520px;width:2px;height:30px;background:#ddd;"></div>
<svg class="s" style="left:2379px;top:1523px;" width="26" height="26" viewBox="0 0 26 26" fill="none"><path d="M13 2.5 L3.5 11.8 L13 21.5 M22 2.5 L12.5 11.8 L22 21.5" stroke="#8f8f8f" stroke-width="2.6" stroke-linecap="round" stroke-linejoin="miter"/></svg>
<svg class="s" style="left:2438px;top:1519px;" width="36" height="34" viewBox="0 0 36 34" fill="none"><circle cx="17" cy="16" r="15" stroke="#8f8f8f" stroke-width="1.8"/><path d="M19 10 L13 16 L19 22" stroke="#999" stroke-width="1.8" stroke-linecap="round" stroke-linejoin="round"/></svg>
<div class="t" style="left:2521.03px;top:1520.3px;font-size:28px;line-height:28px;color:#111;font-weight:400;transform:scaleX(0.9358);transform-origin:0 0;">1-25</div>
<svg class="s" style="left:2624.5px;top:1519px;" width="36" height="34" viewBox="0 0 36 34" fill="none"><circle cx="17" cy="16" r="15" stroke="#f26b2b" stroke-width="1.8"/><path d="M15 10 L21 16 L15 22" stroke="#f26b2b" stroke-width="1.8" stroke-linecap="round" stroke-linejoin="round"/></svg>
<svg class="s" style="left:2692px;top:1523px;" width="26" height="26" viewBox="0 0 26 26" fill="none"><path d="M3.5 2.5 L13 11.8 L3.5 21.5 M12.5 2.5 L22 11.8 L12.5 21.5" stroke="#f26b2b" stroke-width="2.6" stroke-linecap="round" stroke-linejoin="miter"/></svg>
</body></html>
